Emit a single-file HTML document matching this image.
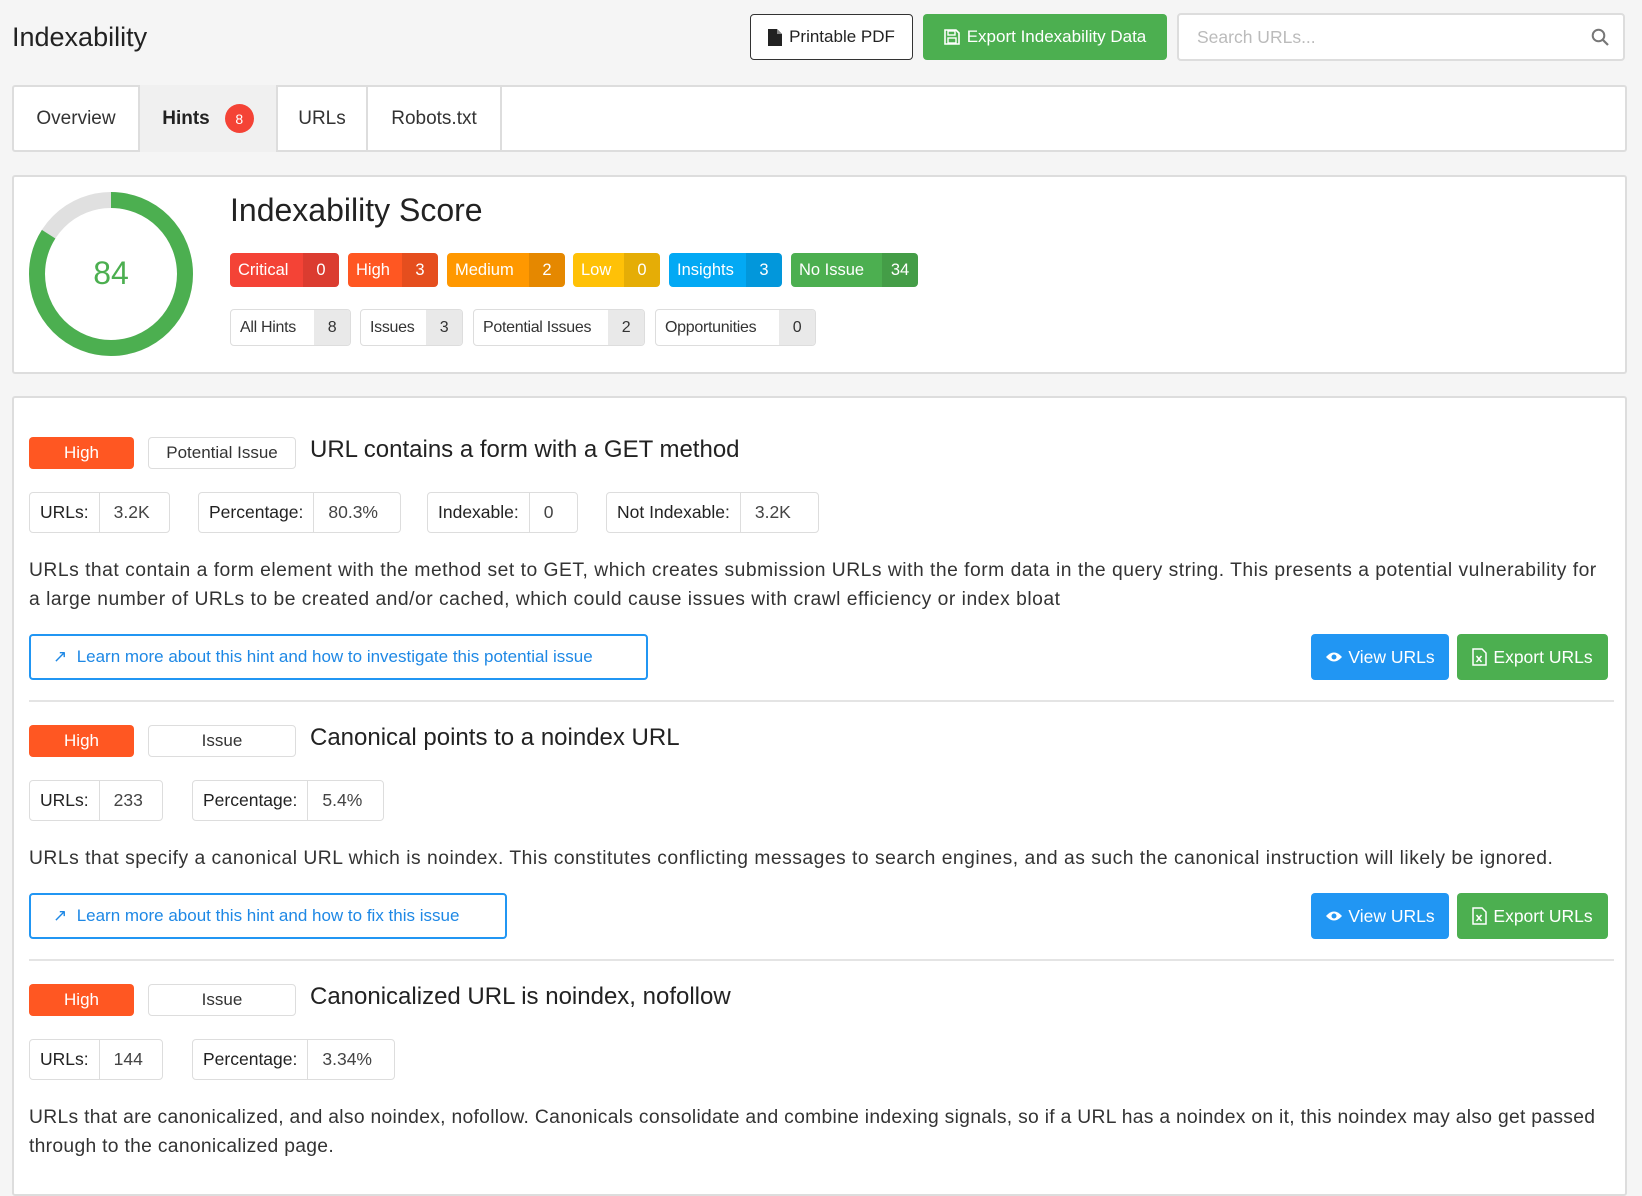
<!DOCTYPE html>
<html><head><meta charset="utf-8"><style>
*{box-sizing:border-box;margin:0;padding:0}
body{width:1642px;height:1167px;background:#f5f5f5;font-family:"Liberation Sans",sans-serif;color:#222;position:relative;overflow:hidden}
.a{position:absolute}
.box{position:absolute;background:#fff;border:2px solid #ddd;border-radius:3px}
.btn{position:absolute;display:flex;align-items:center;justify-content:center;border-radius:4px;font-size:17px}
.bd{position:absolute;display:flex;border-radius:4px;overflow:hidden;color:#fff;font-size:16.5px;height:34px;top:253px;white-space:nowrap}
.bd span{display:flex;align-items:center;padding:0 8px}
.bd span:last-child{flex:0 0 36px;justify-content:center;background:rgba(0,0,0,.1)}
.fl{position:absolute;display:flex;top:309px;height:37px;border:1.5px solid #ddd;border-radius:4px;overflow:hidden;font-size:16px;color:#333;white-space:nowrap;letter-spacing:-.3px}
.fl span{display:flex;align-items:center;padding:0 9px}
.fl span:last-child{flex:0 0 36px;justify-content:center;background:#e9e9e9}
.tab{position:absolute;top:85px;height:67px;display:flex;align-items:center;justify-content:center;font-size:19px;border-right:2px solid #ddd;color:#333}
.hb{position:absolute;left:29px;width:105px;height:32px;background:#ff5722;color:#fff;border-radius:4px;display:flex;align-items:center;justify-content:center;font-size:17px}
.tb{position:absolute;left:148px;width:148px;height:32px;border:1.5px solid #ddd;border-radius:4px;display:flex;align-items:center;justify-content:center;font-size:17px;color:#333}
.ht{position:absolute;left:310px;font-size:24px;color:#222}
.st{position:absolute;display:flex;height:41px;border:1.5px solid #ddd;border-radius:4px;font-size:17.5px;overflow:hidden;white-space:nowrap}
.st span{display:flex;align-items:center;padding:0 10px}
.st span:first-child{border-right:1.5px solid #ddd}
.st span:last-child{padding:0 14px;color:#444}
.ds{position:absolute;left:29px;width:1600px;font-size:19.3px;line-height:29px;color:#333;letter-spacing:.5px;white-space:nowrap}
.lm{position:absolute;left:29px;height:46px;border:2px solid #2196f3;border-radius:4px;color:#1e88e5;display:flex;align-items:center;padding-left:22px;font-size:17px}
.vu{position:absolute;left:1311px;width:138px;height:46px;background:#2196f3;color:#fff;border-radius:4px;display:flex;align-items:center;justify-content:center;font-size:17.5px}
.eu{position:absolute;left:1457px;width:151px;height:46px;background:#4caf50;color:#fff;border-radius:4px;display:flex;align-items:center;justify-content:center;font-size:17.5px}
.hr{position:absolute;left:29px;width:1585px;height:2px;background:#e4e4e4}
</style></head><body>
<div class="a" style="left:12px;top:22px;font-size:27px;color:#222">Indexability</div>
<div class="btn" style="left:750px;top:14px;width:163px;height:46px;border:1.5px solid #333;background:#fff;color:#222"><svg width="14" height="17" viewBox="0 0 14 17" style="margin-right:7px"><path d="M0 0h9l5 5v12H0z" fill="#222"/><path d="M9 0v5h5" fill="#888"/></svg>Printable PDF</div>
<div class="btn" style="left:923px;top:14px;width:244px;height:46px;background:#4caf50;color:#fff"><svg width="16" height="16" viewBox="0 0 16 16" style="margin-right:7px"><path d="M1 1h11l3 3v11H1z" fill="none" stroke="#fff" stroke-width="1.6"/><rect x="4" y="2" width="7" height="4" fill="none" stroke="#fff" stroke-width="1.4"/><rect x="4" y="9" width="8" height="5" fill="none" stroke="#fff" stroke-width="1.4"/></svg>Export Indexability Data</div>
<div class="a" style="left:1177px;top:13px;width:448px;height:48px;background:#fff;border:2px solid #ddd;border-radius:4px;font-size:17.5px;color:#bbb;padding:12px 18px">Search URLs...<svg class="a" style="right:14px;top:13px" width="18" height="18" viewBox="0 0 18 18"><circle cx="7.5" cy="7.5" r="5.8" fill="none" stroke="#777" stroke-width="2"/><path d="M12 12l5 5" stroke="#777" stroke-width="2.2"/></svg></div>

<div class="box" style="left:12px;top:85px;width:1615px;height:67px"></div>
<div class="tab" style="left:14px;width:126px">Overview</div>
<div class="tab" style="left:140px;width:138px;background:#f0f0f0;font-weight:bold;color:#222">Hints<span style="display:inline-flex;width:29px;height:29px;border-radius:50%;background:#f44336;color:#fff;font-size:14px;font-weight:normal;align-items:center;justify-content:center;margin-left:15px">8</span></div>
<div class="tab" style="left:278px;width:90px">URLs</div>
<div class="tab" style="left:368px;width:134px">Robots.txt</div>

<div class="box" style="left:12px;top:175px;width:1615px;height:199px"></div>
<svg class="a" style="left:28px;top:191px" width="166" height="166" viewBox="0 0 166 166"><circle cx="83" cy="83" r="74" fill="none" stroke="#e0e0e0" stroke-width="16"/><circle cx="83" cy="83" r="74" fill="none" stroke="#4caf50" stroke-width="16" stroke-dasharray="390.6 465" transform="rotate(-90 83 83)"/></svg>
<div class="a" style="left:60px;top:255px;width:102px;text-align:center;font-size:32px;color:#4caf50">84</div>
<div class="a" style="left:230px;top:192px;font-size:32px;color:#222">Indexability Score</div>
<div class="bd" style="left:230px;width:109px;background:#f44336"><span style="flex:1">Critical</span><span>0</span></div>
<div class="bd" style="left:348px;width:90px;background:#ff5722"><span style="flex:1">High</span><span>3</span></div>
<div class="bd" style="left:447px;width:118px;background:#ff9800"><span style="flex:1">Medium</span><span>2</span></div>
<div class="bd" style="left:573px;width:87px;background:#ffc107"><span style="flex:1">Low</span><span>0</span></div>
<div class="bd" style="left:669px;width:113px;background:#03a9f4"><span style="flex:1">Insights</span><span>3</span></div>
<div class="bd" style="left:791px;width:127px;background:#4caf50"><span style="flex:1">No Issue</span><span>34</span></div>
<div class="fl" style="left:230px;width:121px"><span style="flex:1">All Hints</span><span>8</span></div>
<div class="fl" style="left:360px;width:103px"><span style="flex:1">Issues</span><span>3</span></div>
<div class="fl" style="left:473px;width:172px"><span style="flex:1">Potential Issues</span><span>2</span></div>
<div class="fl" style="left:655px;width:161px"><span style="flex:1">Opportunities</span><span>0</span></div>

<div class="box" style="left:12px;top:396px;width:1615px;height:800px"></div>

<div class="hb" style="top:437px">High</div><div class="tb" style="top:437px">Potential Issue</div>
<div class="ht" style="top:436px">URL contains a form with a GET method</div>
<div class="st" style="left:29px;top:492px;width:141px"><span>URLs:</span><span>3.2K</span></div>
<div class="st" style="left:198px;top:492px;width:203px"><span>Percentage:</span><span>80.3%</span></div>
<div class="st" style="left:427px;top:492px;width:151px"><span>Indexable:</span><span>0</span></div>
<div class="st" style="left:606px;top:492px;width:213px"><span>Not Indexable:</span><span>3.2K</span></div>
<div class="ds" style="top:556px">URLs that contain a form element with the method set to GET, which creates submission URLs with the form data in the query string. This presents a potential vulnerability for<br>a large number of URLs to be created and/or cached, which could cause issues with crawl efficiency or index bloat</div>
<div class="lm" style="top:634px;width:619px">&#x2197;&#xFE0E;&nbsp; Learn more about this hint and how to investigate this potential issue</div>
<div class="vu" style="top:634px"><svg width="18" height="12" viewBox="0 0 18 12" style="margin-right:5px"><path d="M1 6Q9-3 17 6Q9 15 1 6z" fill="#fff"/><circle cx="9" cy="6" r="2.5" fill="#2196f3"/></svg>View URLs</div>
<div class="eu" style="top:634px"><svg width="15" height="18" viewBox="0 0 15 18" style="margin-right:6px"><path d="M1 1h9l4 4v12H1z" fill="none" stroke="#fff" stroke-width="1.5"/><path d="M4.5 8l5 6M9.5 8l-5 6" stroke="#fff" stroke-width="1.5"/></svg>Export URLs</div>
<div class="hr" style="top:700px"></div>

<div class="hb" style="top:725px">High</div><div class="tb" style="top:725px">Issue</div>
<div class="ht" style="top:724px">Canonical points to a noindex URL</div>
<div class="st" style="left:29px;top:780px;width:134px"><span>URLs:</span><span>233</span></div>
<div class="st" style="left:192px;top:780px;width:192px"><span>Percentage:</span><span>5.4%</span></div>
<div class="ds" style="top:844px">URLs that specify a canonical URL which is noindex. This constitutes conflicting messages to search engines, and as such the canonical instruction will likely be ignored.</div>
<div class="lm" style="top:893px;width:478px">&#x2197;&#xFE0E;&nbsp; Learn more about this hint and how to fix this issue</div>
<div class="vu" style="top:893px"><svg width="18" height="12" viewBox="0 0 18 12" style="margin-right:5px"><path d="M1 6Q9-3 17 6Q9 15 1 6z" fill="#fff"/><circle cx="9" cy="6" r="2.5" fill="#2196f3"/></svg>View URLs</div>
<div class="eu" style="top:893px"><svg width="15" height="18" viewBox="0 0 15 18" style="margin-right:6px"><path d="M1 1h9l4 4v12H1z" fill="none" stroke="#fff" stroke-width="1.5"/><path d="M4.5 8l5 6M9.5 8l-5 6" stroke="#fff" stroke-width="1.5"/></svg>Export URLs</div>
<div class="hr" style="top:959px"></div>

<div class="hb" style="top:984px">High</div><div class="tb" style="top:984px">Issue</div>
<div class="ht" style="top:983px">Canonicalized URL is noindex, nofollow</div>
<div class="st" style="left:29px;top:1039px;width:134px"><span>URLs:</span><span>144</span></div>
<div class="st" style="left:192px;top:1039px;width:203px"><span>Percentage:</span><span>3.34%</span></div>
<div class="ds" style="top:1103px;letter-spacing:.3px">URLs that are canonicalized, and also noindex, nofollow. Canonicals consolidate and combine indexing signals, so if a URL has a noindex on it, this noindex may also get passed<br>through to the canonicalized page.</div>
</body></html>
